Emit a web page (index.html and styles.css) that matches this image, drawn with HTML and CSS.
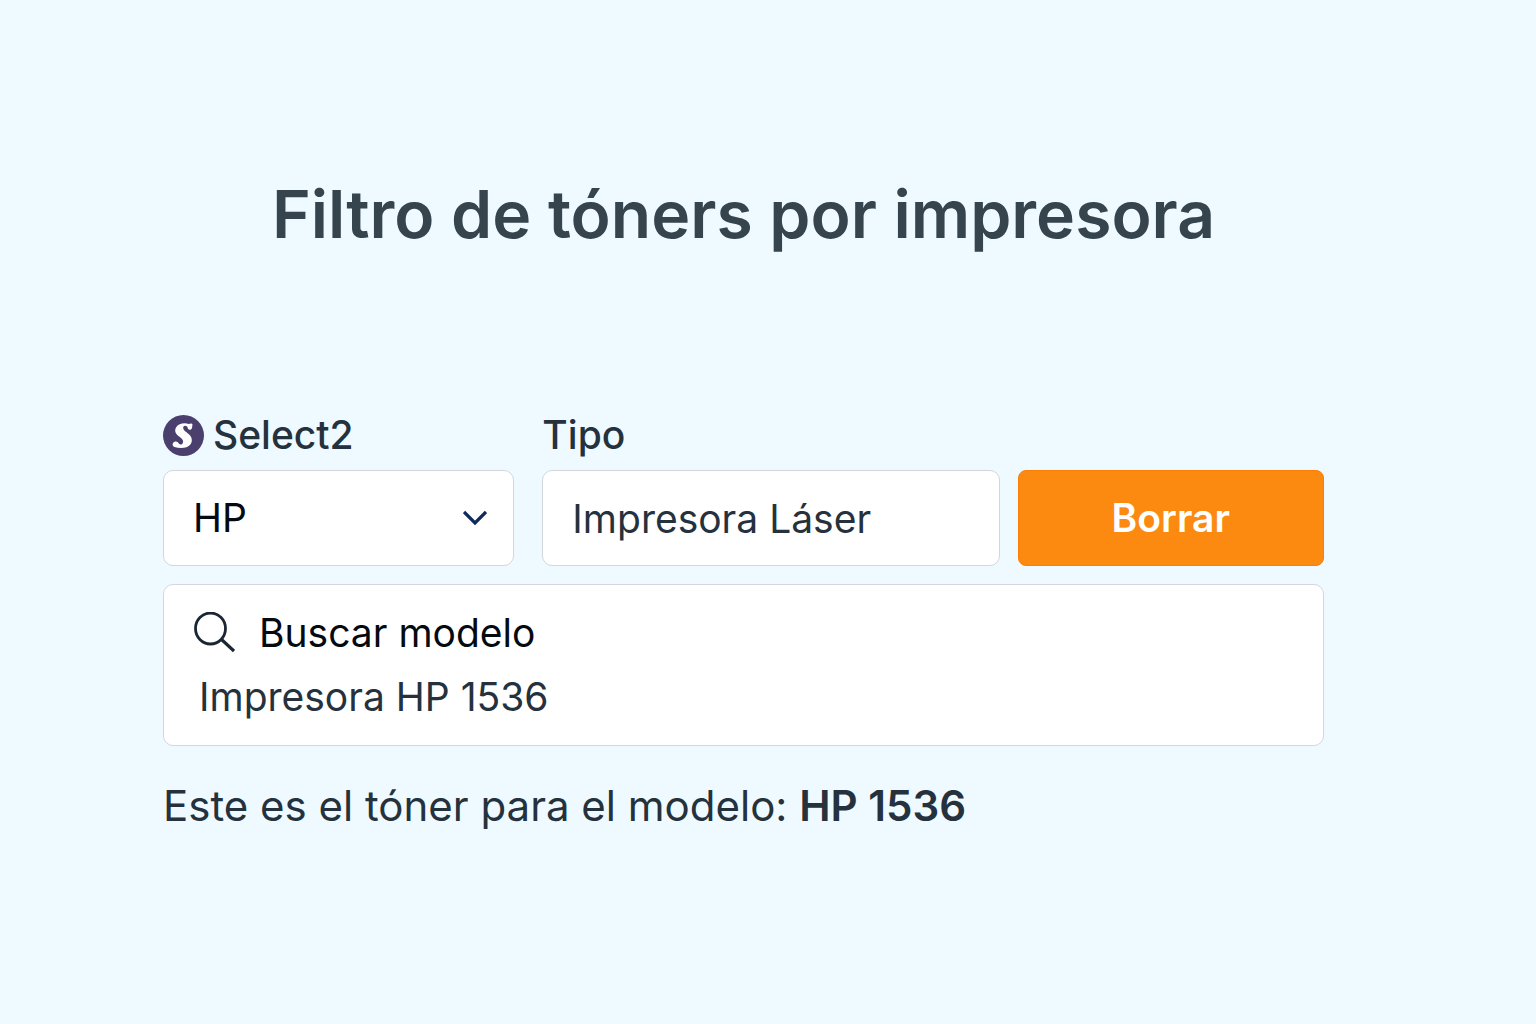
FILE: index.html
```html
<!DOCTYPE html>
<html lang="es">

<head>
    <meta charset="UTF-8">
    <meta name="viewport" content="width=device-width, initial-scale=1.0">
    <title>Filtro de tóners por impresora</title>
    <link rel="stylesheet" href="styles.css">
</head>

<body>

    <main class="filtro">
        <h1>Filtro de tóners por impresora</h1>

        <form class="filtro-form">
            <div class="fila">
                <div class="campos">
                    <div class="campo">
                        <label for="marca">
                            <svg class="logo" viewBox="0 0 41 41" aria-hidden="true">
                                <circle cx="20.5" cy="20.5" r="20.5" fill="#4a3f6d"/>
                                <path d="M29.5 9.5C29 8 27 8.5 26 9C22 7.8 15.5 8 13 12.5C10.8 17 13.5 19.5 16.5 21.8C19 23.7 21 25.5 19.8 28C18.8 30 16.8 30 15.8 28.5C15 27 13.5 26 11.5 26.8C9 28 9 31 11.5 32C15 33.2 20 33.4 23.5 32.2C28 30.5 29.8 26.5 28.3 22.5C27 19 23 17.5 21 15C19.5 13 20 11 22 10.8C24 10.8 24.5 12 25 13.8C26 15.5 28.5 15 29 13Z" fill="#fff"/>
                            </svg>
                            Select2
                        </label>
                        <div class="select-box">
                            <select id="marca">
                                <option>HP</option>
                                <option>Canon</option>
                                <option>Epson</option>
                            </select>
                            <svg class="flecha" viewBox="0 0 24 16" aria-hidden="true">
                                <path d="M1 2L12 13L23 2" fill="none" stroke="#0f2a5c" stroke-width="3.2"/>
                            </svg>
                        </div>
                    </div>

                    <div class="campo campo-tipo">
                        <label for="tipo">Tipo</label>
                        <input type="text" id="tipo" value="Impresora Láser">
                    </div>
                </div>

                <button type="reset" class="borrar">Borrar</button>
            </div>

            <div class="buscador">
                <label for="modelo">
                    <svg class="lupa" viewBox="0 0 42 42" aria-hidden="true">
                        <ellipse cx="17.5" cy="16.5" rx="15" ry="15.5" fill="none" stroke="#1a2733" stroke-width="2.8"/>
                        <path d="M28 27L41 39" stroke="#1a2733" stroke-width="3.2"/>
                    </svg>
                    Buscar modelo
                </label>
                <input type="text" id="modelo" value="Impresora HP 1536">
            </div>
        </form>

        <p class="resultado">Este es el tóner para el modelo: <strong>HP 1536</strong></p>
    </main>

</body>

</html>
```

FILE: styles.css
```css
* {
    box-sizing: border-box;
}

body {
    margin: 0;
    background: #eefaff;
    font-family: Inter, "Liberation Sans", sans-serif;
    font-size: 39px;
    line-height: 48px;
    color: #25323d;
}

.filtro {
    padding: 168px 212px 40px 163px;
}

h1 {
    margin: 0;
    font-size: 66px;
    font-weight: 600;
    line-height: 92px;
    text-align: center;
    color: #36444e;
}

input,
select,
button {
    font: inherit;
    color: inherit;
}

.filtro-form {
    display: flex;
    flex-direction: column;
    gap: 18px;
    margin-top: 151px;
}

.fila {
    display: flex;
    align-items: flex-end;
    gap: 18px;
}

.campos {
    display: flex;
    flex: 838;
    gap: 28px;
    min-width: 0;
}

.campo {
    display: flex;
    flex: 352;
    flex-direction: column;
    gap: 11px;
    min-width: 0;
}

.campo-tipo {
    flex: 458;
}

.campo label {
    display: flex;
    align-items: center;
    gap: 9px;
    font-weight: 500;
}

.logo {
    width: 41px;
    height: 41px;
}

.select-box {
    position: relative;
}

.campo select,
.campo input {
    width: 100%;
    height: 96px;
    padding: 0 29px;
    background: white;
    border: 1px solid #d3d7dc;
    border-radius: 10px;
}

.campo select {
    appearance: none;
    color: #050a10;
}

.flecha {
    position: absolute;
    top: 40px;
    right: 27px;
    width: 24px;
    height: 16px;
    pointer-events: none;
}

.borrar {
    flex: 305;
    height: 96px;
    padding: 0;
    background: #fd8a10;
    border: 1px solid #fb7e06;
    border-radius: 8px;
    font-weight: 600;
    color: white;
    cursor: pointer;
}

.buscador {
    display: flex;
    flex-direction: column;
    gap: 16px;
    padding: 24px 29px;
    background: white;
    border: 1px solid #d3d7dc;
    border-radius: 10px;
}

.buscador label {
    display: flex;
    align-items: center;
    gap: 24px;
    color: #050a10;
}

.lupa {
    width: 42px;
    height: 42px;
}

.buscador input {
    width: 100%;
    height: 48px;
    padding: 0 6px;
    background: none;
    border: none;
}

.resultado {
    margin: 36px 0 0;
    font-size: 42px;
}

.resultado strong {
    font-weight: 600;
}
```
